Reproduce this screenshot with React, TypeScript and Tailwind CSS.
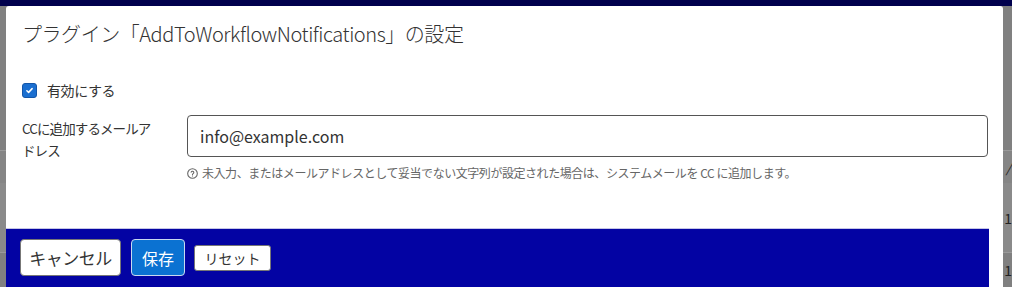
import React from "react";

const jp = { fontFamily: '"Noto Sans CJK JP", "Noto Sans", sans-serif' };

function HelpIcon() {
  return (
    <svg width="11" height="11" viewBox="0 0 24 24" fill="none" stroke="#666" strokeWidth="2.4" strokeLinecap="round" strokeLinejoin="round">
      <circle cx="12" cy="12" r="10.5" />
      <path d="M9.1 9a3 3 0 0 1 5.8 1c0 2-3 2.6-3 4.5" />
      <path d="M12 17.6h.01" />
    </svg>
  );
}

export default function App() {
  return (
    <div className="relative w-[1012px] h-[287px] overflow-hidden bg-[#808080]" style={jp}>
      {/* background page */}
      <div className="flex flex-col h-full">
        <div className="h-[6px] bg-[#00004d]" />
        <div className="flex-1 flex flex-col">
          <div className="h-[144px]" />
          <div className="h-[1px] bg-[#9a9a9a]" />
          <div className="h-[32px] bg-[#858585] flex justify-end items-center pr-[1px]">
            <span className="text-[13px] italic text-[#222] leading-none">/</span>
          </div>
          <div className="h-[69px] bg-[#8a8a8a] flex justify-end items-center">
            <span className="text-[14px] text-[#222] leading-none">1</span>
          </div>
          <div className="h-[1px] bg-[#9a9a9a]" />
          <div className="flex-1 flex justify-end items-center">
            <span className="text-[14px] text-[#222] leading-none">1</span>
          </div>
        </div>
      </div>

      {/* dialog */}
      <div className="absolute left-[6px] top-[6px] w-[997px] h-[300px] bg-white rounded-t-[3px] flex flex-col">
        <div className="px-[16px] pt-[12px] text-[20px] leading-[32px] font-light text-[#333] tracking-[-0.45px]">
          プラグイン「AddToWorkflowNotifications」の設定
        </div>
        <div className="px-[16px] pt-[30px] flex items-center gap-[10px]">
          <div className="w-[15px] h-[15px] rounded-[3px] bg-[#1b6fd0] border border-[#1456a8] flex items-center justify-center">
            <svg width="9" height="9" viewBox="0 0 12 12" fill="none" stroke="white" strokeWidth="2" strokeLinecap="round" strokeLinejoin="round">
              <path d="M2.5 6.3l2.3 2.2 4.7-5" />
            </svg>
          </div>
          <span className="text-[14px] leading-[20px] text-[#333] tracking-[-0.4px]">有効にする</span>
        </div>
        <div className="pl-[16px] pr-[15px] pt-[15px] flex">
          <div className="w-[165px] shrink-0 pt-[2px] text-[13.5px] leading-[22px] text-[#333] tracking-[-0.9px]">
            CCに追加するメールア
            <br />
            ドレス
          </div>
          <div className="flex-1 flex flex-col">
            <div className="h-[42px] rounded-[4px] border border-[#555] flex items-center px-[12px] text-[16px] text-[#333]">
              info@example.com
            </div>
            <div className="pt-[7px] flex items-center gap-[4px] text-[12px] leading-[18px] text-[#666] tracking-[-0.45px]">
              <HelpIcon />
              <span>未入力、またはメールアドレスとして妥当でない文字列が設定された場合は、システムメールを CC に追加します。</span>
            </div>
          </div>
        </div>
        <div className="mt-[46px] mr-[14px] flex-1 bg-[#0303a3] border-t border-[#c5c5e6] pl-[14px] pt-[10px] flex items-start">
          <div className="flex items-center gap-[10px]">
            <button className="w-[101px] h-[37px] bg-white border border-[#777] rounded-[4px] text-[17px] text-[#333] tracking-[-0.5px]">
              キャンセル
            </button>
            <button className="w-[54px] h-[37px] bg-[#0b72d2] border border-[#c8d8f0] rounded-[4px] text-[16px] text-white">
              保存
            </button>
            <button className="ml-[-1px] w-[77px] h-[26px] bg-white border border-[#777] rounded-[3px] text-[14px] leading-none text-[#333]">
              リセット
            </button>
          </div>
        </div>
      </div>
    </div>
  );
}
